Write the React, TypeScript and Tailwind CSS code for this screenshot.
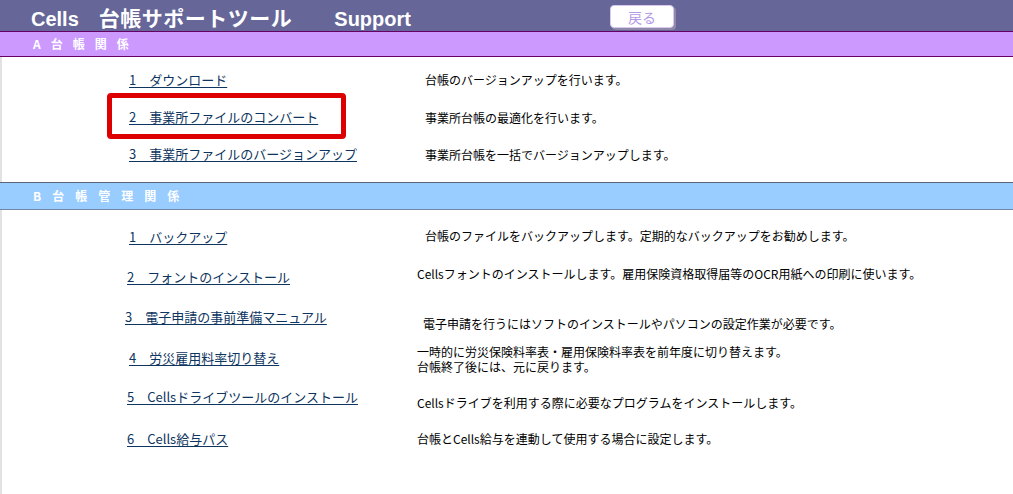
import React from 'react';

type Row = {
  label: string;
  desc: string[];
  linkCls: string;
  descCls: string;
};

const sectionA: Row[] = [
  { label: '1\u3000ダウンロード', desc: ['台帳のバージョンアップを行います。'], linkCls: 'pl-[127px] mb-[4px]', descCls: 'pl-[8px]' },
  { label: '2\u3000事業所ファイルのコンバート', desc: ['事業所台帳の最適化を行います。'], linkCls: 'pl-[127px] mb-[4px]', descCls: 'pl-[8px] mt-[2px]' },
  { label: '3\u3000事業所ファイルのバージョンアップ', desc: ['事業所台帳を一括でバージョンアップします。'], linkCls: 'pl-[127px] mb-[4px]', descCls: 'pl-[8px] mt-[2px]' },
];

const sectionB: Row[] = [
  { label: '1\u3000バックアップ', desc: ['台帳のファイルをバックアップします。定期的なバックアップをお勧めします。'], linkCls: 'pl-[127px] mb-[2px]', descCls: 'pl-[8px] mb-[2px]' },
  { label: '2\u3000フォントのインストール', desc: ['Cellsフォントのインストールします。雇用保険資格取得届等のOCR用紙への印刷に使います。'], linkCls: 'pl-[125px] mb-[2px]', descCls: 'pl-0 mb-[6px]' },
  { label: '3\u3000電子申請の事前準備マニュアル', desc: ['電子申請を行うにはソフトのインストールやパソコンの設定作業が必要です。'], linkCls: 'pl-[123px] mb-[2px]', descCls: 'pl-[6px] mt-[14px]' },
  { label: '4\u3000労災雇用料率切り替え', desc: ['一時的に労災保険料率表・雇用保険料率表を前年度に切り替えます。', '台帳終了後には、元に戻ります。'], linkCls: 'pl-[127px]', descCls: 'pl-0 mt-[6px]' },
  { label: '5\u3000Cellsドライブツールのインストール', desc: ['Cellsドライブを利用する際に必要なプログラムをインストールします。'], linkCls: 'pl-[125px] mb-[2px]', descCls: 'pl-0 mt-[12px]' },
  { label: '6\u3000Cells給与パス', desc: ['台帳とCells給与を連動して使用する場合に設定します。'], linkCls: 'pl-[125px] mt-[2px]', descCls: 'pl-0 mt-[4px]' },
];

const jp = 'font-["Noto_Sans_CJK_JP","Noto_Sans",sans-serif]';

function BarTitle({ chars, gap }: { chars: string[]; gap: string }) {
  return (
    <div className={`flex items-center pl-[33px] text-[12px] font-bold text-white ${gap}`}>
      {chars.map((c, i) => (
        <span key={i}>{c}</span>
      ))}
    </div>
  );
}

function ItemRow({ row, height }: { row: Row; height: string }) {
  return (
    <div className={`flex items-center ${height}`}>
      <div className={`w-[415px] shrink-0 ${row.linkCls}`}>
        <a href="#" className="text-[13px] leading-[15px] text-[#0d3560] underline underline-offset-[2px] whitespace-nowrap">
          {row.label}
        </a>
      </div>
      <div className={`text-[12px] leading-[15px] text-black whitespace-nowrap ${row.descCls}`}>
        {row.desc.map((d, i) => (
          <div key={i}>{d}</div>
        ))}
      </div>
    </div>
  );
}

export default function App() {
  return (
    <div className={`relative flex h-[494px] w-[1013px] flex-col overflow-hidden bg-white ${jp}`}>
      {/* ヘッダー */}
      <div className="flex h-[31px] items-center bg-[#666699]">
        <h1 className='w-[579px] shrink-0 ml-[31px] pt-[4px] text-[20px] font-bold leading-none text-white whitespace-nowrap font-["Liberation_Sans","Noto_Sans_CJK_JP",sans-serif]'>
          Cells
          <span className="ml-[20px] text-[21px] tracking-[0.5px] font-['Noto_Sans_CJK_JP',sans-serif]">台帳サポートツール</span>
          <span className="ml-[42px]">Support</span>
        </h1>
        <button className="mt-[2px] flex h-[23px] w-[64px] items-center justify-center rounded-[4px] border border-[#d8c8f4] bg-white text-[14px] leading-none text-[#b39ae6] shadow-[2px_2px_0_#8e8aa8]">
          戻る
        </button>
      </div>

      {/* A 台帳関係 */}
      <div className="flex h-[26px] items-center border-y border-[#660066] bg-[#cc99ff]">
        <BarTitle chars={['A', '台', '帳', '関', '係']} gap="gap-[10px]" />
      </div>
      <div className="border-l-2 border-[#e2e2e2] pt-[4px] pb-[10px]">
        {sectionA.map((r, i) => (
          <ItemRow key={i} row={r} height="h-[37px]" />
        ))}
      </div>

      {/* B 台帳管理関係 */}
      <div className="flex h-[28px] items-center border-t border-t-[#5c6478] border-b border-b-[#6f87a8] bg-[#99ccff]">
        <BarTitle chars={['B', '台', '帳', '管', '理', '関', '係']} gap="gap-[11px]" />
      </div>
      <div className="flex-1 border-l-2 border-[#e2e2e2] pt-[6px]">
        {sectionB.map((r, i) => (
          <ItemRow key={i} row={r} height="h-[40px]" />
        ))}
      </div>

      {/* 赤枠（注記） */}
      <div className="pointer-events-none absolute left-[107px] top-[93px] h-[46px] w-[239px] rounded-[4px] border-[5px] border-[#dd0000]" />
    </div>
  );
}
